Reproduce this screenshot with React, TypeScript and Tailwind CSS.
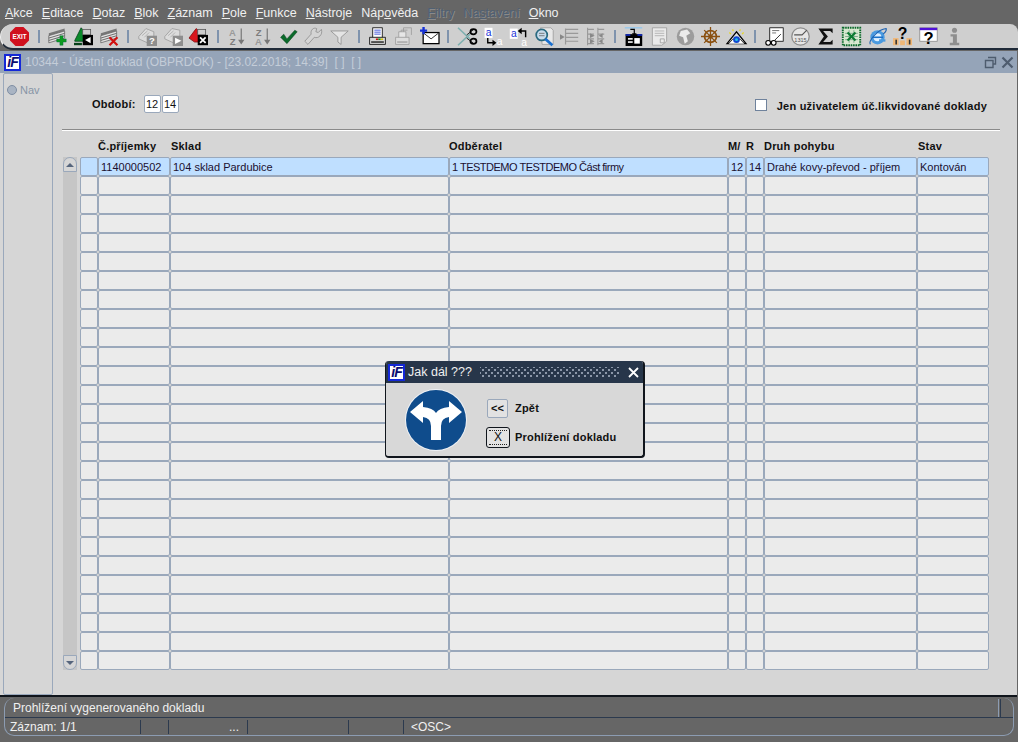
import React from 'react'

const Ico = ({ children }: { children: React.ReactNode }) => (
  <svg width="19" height="19" viewBox="0 0 24 24" className="overflow-visible">{children}</svg>
)

const Stripes = () => (
  <g>
    <path d="M1 8 L21 2 V5 L1 11 Z" fill="#777" />
    <path d="M1 11 L21 5 V14 L1 20 Z" fill="#e2e2e2" stroke="#666" strokeWidth="1" />
    <path d="M1 14 L21 8 M1 17 L21 11" stroke="#666" strokeWidth="1.2" />
  </g>
)

const icons: React.ReactNode[] = [
  <Ico key="exit">
    <path d="M7 0 H17 L24 7 V17 L17 24 H7 L0 17 V7 Z" fill="#d0101e" />
    <text x="12" y="15.5" textAnchor="middle" fontSize="8" fontWeight="700" fill="#fff" fontFamily="Liberation Sans">EXIT</text>
  </Ico>,
  <Ico key="add"><Stripes /><path d="M15 11 h4 v4 h4 v4 h-4 v4 h-4 v-4 h-4 v-4 h4 Z" fill="#0c9a20" stroke="#064" strokeWidth=".5" /></Ico>,
  <Ico key="rec">
    <path d="M1 17 L9 1 L15 8 V18 H1 Z" fill="#0a8a2a" stroke="#04401a" />
    <rect x="11" y="3" width="10" height="7" fill="#ccc" stroke="#555" />
    <rect x="11" y="10" width="13" height="13" fill="#000" />
    <path d="M14 16.5 L21 12.5 V20.5 Z" fill="#fff" />
    <path d="M0 20 h10 v3 h-10 Z" fill="#06401a" />
  </Ico>,
  <Ico key="del"><Stripes /><path d="M12 13 L22 23 M22 13 L12 23" stroke="#d01010" strokeWidth="2.8" /></Ico>,
  <Ico key="q">
    <path d="M1 12 L10 2 L20 6 V12 L12 20 L1 15 Z" fill="#dcdcdc" stroke="#999" />
    <path d="M5 11 L12 5 M8 13 L14 7" stroke="#aaa" />
    <rect x="11" y="11" width="13" height="13" fill="#8e8e8e" />
    <text x="17.5" y="22" textAnchor="middle" fontSize="12" fontWeight="700" fill="#fff" fontFamily="Liberation Sans">?</text>
  </Ico>,
  <Ico key="play">
    <path d="M1 12 L10 2 L20 4 V12 L12 20 L1 15 Z" fill="#dcdcdc" stroke="#999" />
    <path d="M5 11 L12 5 M8 13 L14 7" stroke="#aaa" />
    <rect x="11" y="11" width="13" height="13" fill="#8e8e8e" />
    <path d="M14 13.5 L22 17.5 L14 21.5 Z" fill="#fff" />
  </Ico>,
  <Ico key="redx">
    <path d="M0 14 L9 2 L15 7 V19 L7 19 Z" fill="#d8161c" stroke="#801010" />
    <rect x="11" y="3" width="10" height="7" fill="#ccc" stroke="#555" />
    <rect x="11" y="10" width="13" height="13" fill="#000" />
    <path d="M14 13 L21 20 M21 13 L14 20" stroke="#fff" strokeWidth="2.2" />
  </Ico>,
  <Ico key="az">
    <text x="7" y="11" textAnchor="middle" fontSize="12" fontWeight="700" fill="#9a9a9a" fontFamily="Liberation Sans">A</text>
    <text x="7" y="23" textAnchor="middle" fontSize="12" fontWeight="700" fill="#7c7c7c" fontFamily="Liberation Sans">Z</text>
    <path d="M18 2 V18" stroke="#777" strokeWidth="1.5" /><path d="M14 16 H22 L18 22 Z" fill="#777" />
  </Ico>,
  <Ico key="za">
    <text x="7" y="11" textAnchor="middle" fontSize="12" fontWeight="700" fill="#7c7c7c" fontFamily="Liberation Sans">Z</text>
    <text x="7" y="23" textAnchor="middle" fontSize="12" fontWeight="700" fill="#9a9a9a" fontFamily="Liberation Sans">A</text>
    <path d="M18 2 V18" stroke="#777" strokeWidth="1.5" /><path d="M14 16 H22 L18 22 Z" fill="#777" />
  </Ico>,
  <Ico key="ok"><path d="M2 13 L6 9 L10 15 L20 4 L23 6 L10 21 Z" fill="#0a6a2a" stroke="#043a16" strokeWidth=".6" /></Ico>,
  <Ico key="wrench"><path d="M22 3 L18 7 L15 6 L16 2 C12 0 8 4 9 9 L1 18 L5 22 L13 13 C18 15 24 10 22 3 Z" fill="#d4d4d4" stroke="#8c8c8c" /></Ico>,
  <Ico key="filter"><path d="M1 5 H23 L14 13 V22 L10 19 V13 Z" fill="#e4e4e4" stroke="#8c8c8c" /></Ico>,
  <Ico key="print">
    <rect x="6" y="1" width="12" height="13" fill="#fff" stroke="#000" />
    <path d="M8 4 h8 M8 6.5 h8 M8 9 h8" stroke="#1a30d0" />
    <path d="M2 13 H22 V22 H2 Z" fill="#d8d8d8" stroke="#000" />
    <path d="M4 19 h16" stroke="#333" strokeWidth="2" />
    <path d="M10 15.5 h3" stroke="#d01010" strokeWidth="2" /><path d="M13 15.5 h3" stroke="#0a9a20" strokeWidth="2" /><path d="M16 15.5 h3" stroke="#d8c010" strokeWidth="2" />
  </Ico>,
  <Ico key="print2">
    <path d="M9 12 V4 H17 M12 10 V1 H22 V10" fill="none" stroke="#999" />
    <path d="M6 14 V6 H15 V14 Z" fill="#e6e6e6" stroke="#999" />
    <path d="M2 13 H19 V22 H2 Z" fill="#ddd" stroke="#999" />
    <path d="M4 19 h13" stroke="#aaa" strokeWidth="2" />
  </Ico>,
  <Ico key="mail">
    <rect x="4" y="7" width="20" height="14" fill="#fff" stroke="#000" strokeWidth="1.6" />
    <path d="M5 8 L14 15 L23 8" fill="none" stroke="#000" />
    <path d="M3 0 h3 v3 h3 v3 h-3 v3 h-3 v-3 h-3 v-3 h3 Z" fill="#1430d8" />
  </Ico>,
  <Ico key="cut">
    <path d="M0 1 L15 15" stroke="#7fb0b0" strokeWidth="2" /><path d="M0 23 L15 9" stroke="#7fb0b0" strokeWidth="2" />
    <path d="M11 10 L20 3 M11 14 L20 21" stroke="#000" strokeWidth="1" />
    <ellipse cx="19.5" cy="6" rx="3.8" ry="3.2" fill="none" stroke="#000" strokeWidth="2.2" />
    <ellipse cx="19.5" cy="18" rx="3.8" ry="3.2" fill="none" stroke="#000" strokeWidth="2.2" />
  </Ico>,
  <Ico key="copy">
    <rect x="2" y="1" width="10" height="13" fill="#fff" />
    <text x="7" y="11.5" textAnchor="middle" fontSize="13" fill="#1a30d8" fontFamily="Liberation Sans">a</text>
    <path d="M6 14 V20 H13" fill="none" stroke="#000" strokeWidth="1.8" /><path d="M12 16 L17 20 L12 24 Z" fill="#000" />
    <text x="21" y="23" textAnchor="middle" fontSize="13" fill="#fff" fontFamily="Liberation Sans">a</text>
  </Ico>,
  <Ico key="paste">
    <rect x="1" y="2" width="10" height="13" fill="#fff" />
    <text x="6" y="12.5" textAnchor="middle" fontSize="13" fill="#1a30d8" fontFamily="Liberation Sans">a</text>
    <path d="M21 13 V5 H14" fill="none" stroke="#000" strokeWidth="1.8" /><path d="M16 1 L11 5 L16 9 Z" fill="#000" />
    <text x="19" y="24" textAnchor="middle" fontSize="13" fill="#fff" fontFamily="Liberation Sans">a</text>
  </Ico>,
  <Ico key="find">
    <path d="M7 1 H20 L23 4 V22 H9 Z" fill="#e8e8e8" stroke="#999" />
    <circle cx="8.5" cy="10" r="7" fill="#c8dcec" stroke="#2a6a80" strokeWidth="2.2" />
    <path d="M5 8 h7 M5 11 h7" stroke="#666" />
    <path d="M13 15 L22 23" stroke="#1a70d0" strokeWidth="3.4" />
  </Ico>,
  <Ico key="list">
    <path d="M7 2 V22 M7 3 H23 M7 8 H23 M7 13 H23 M7 18 H23" stroke="#999" strokeWidth="1.5" fill="none" />
    <path d="M0 9 L6 12.5 L0 16 Z" fill="#888" />
  </Ico>,
  <Ico key="cols">
    <path d="M2 1 V23 M15 1 V23 M2 3 H10 M2 9 H10 M2 15 H10 M2 21 H10 M15 3 H23 M15 15 H23 M15 21 H23 M15 9 H23" stroke="#999" strokeWidth="1.4" fill="none" />
    <path d="M5 8 L11 11 L5 14 Z M21 8 L16 11 L21 14 Z M5 15 L11 18 L5 21 Z M21 15 L16 18 L21 21 Z" fill="#888" />
  </Ico>,
  <Ico key="imp">
    <path d="M1 1 H23" stroke="#9cc8e8" strokeWidth="2" />
    <rect x="2" y="9" width="21" height="15" fill="#000" />
    <path d="M2 9 h6 v2 h-6 Z M17 9 h6 v2 h-6 Z" fill="#1430d8" />
    <rect x="5" y="14" width="6" height="2" fill="#fff" /><rect x="5" y="18" width="6" height="2" fill="#fff" /><rect x="13" y="14" width="7" height="7" fill="#fff" />
    <path d="M8 3 H13 V9" fill="none" stroke="#000" strokeWidth="1.5" /><path d="M10 8 H16 L13 12 Z" fill="#000" />
  </Ico>,
  <Ico key="page">
    <path d="M3 1 H21 V18 L15 23 H3 Z" fill="#eaeaea" stroke="#999" />
    <path d="M6 5 h12 M6 8 h12 M6 11 h12" stroke="#aaa" />
    <path d="M13 15 h5 v5 h-5 Z" fill="none" stroke="#999" />
  </Ico>,
  <Ico key="globe">
    <circle cx="12" cy="12" r="11" fill="#9c9c9c" />
    <path d="M6 5 L14 3 L18 8 L13 11 L15 18 L11 21 L9 13 L4 11 Z" fill="#ececec" />
  </Ico>,
  <Ico key="wheel">
    <circle cx="12" cy="12" r="7.5" fill="none" stroke="#8a5010" strokeWidth="2.2" />
    <circle cx="12" cy="12" r="2.8" fill="#8a5010" />
    <path d="M12 0 V24 M0 12 H24 M4 4 L20 20 M20 4 L4 20" stroke="#8a5010" strokeWidth="1.6" />
  </Ico>,
  <Ico key="eye">
    <path d="M0 21 L12 6 L24 21 Z" fill="#ddd" stroke="#000" strokeWidth="1.6" />
    <path d="M2 21 Q12 7 22 21" fill="#fff" stroke="#000" />
    <circle cx="12" cy="16" r="4.2" fill="#1048d0" /><circle cx="12" cy="16" r="1.8" fill="#20c8e8" />
    <path d="M3 7 l2 2 M7 3 l1 2 M17 3 l-1 2 M21 7 l-2 2" stroke="#e8d820" strokeWidth="1.6" />
  </Ico>,
  <Ico key="chart">
    <rect x="6" y="1" width="17" height="17" fill="#fff" stroke="#000" />
    <path d="M9 4.5 h9 M9 7.5 h5" stroke="#555" /><path d="M12 17 L20 9" stroke="#000" strokeWidth="1" />
    <circle cx="4" cy="20" r="3" fill="#fff" stroke="#000" strokeWidth="1.4" /><circle cx="11" cy="20" r="3" fill="#fff" stroke="#000" strokeWidth="1.4" />
  </Ico>,
  <Ico key="gauge">
    <circle cx="12" cy="12" r="11" fill="#e6e6e6" stroke="#8c8c8c" strokeWidth="1.6" />
    <path d="M4 10 H14 L20 4" fill="none" stroke="#555" strokeWidth="1.4" />
    <text x="12" y="19" textAnchor="middle" fontSize="7" fill="#555" fontFamily="Liberation Sans">1315</text>
  </Ico>,
  <Ico key="sum"><path d="M3 2 H21 V8 L18 5 H9 L15 12 L9 19 H18 L21 16 V22 H3 L10 12 Z" fill="#111" /></Ico>,
  <Ico key="xls">
    <rect x="1" y="1" width="22" height="22" fill="#d8e8d0" stroke="#0a6a2a" strokeWidth="2.4" strokeDasharray="2 1" />
    <path d="M4 8 H20 M4 12 H20 M4 16 H20 M9 4 V20 M15 4 V20" stroke="#6aa080" />
    <path d="M7 7 L17 17 M17 7 L7 17" stroke="#0a7a30" strokeWidth="2.6" />
  </Ico>,
  <Ico key="ie">
    <circle cx="12" cy="13" r="9" fill="#4a9ae0" />
    <circle cx="12" cy="13" r="5" fill="#dff0ff" />
    <rect x="6" y="12" width="13" height="2" fill="#1a70c8" /><rect x="14" y="15.5" width="8" height="3" fill="#4a9ae0" />
    <path d="M3 22 C0 18 12 3 23 2 C24 6 20 8 19 9" fill="none" stroke="#1a60b0" strokeWidth="1.3" />
  </Ico>,
  <Ico key="help1">
    <text x="12" y="15" textAnchor="middle" fontSize="20" fontWeight="700" fill="#000" fontFamily="Liberation Sans">?</text>
    <rect x="0" y="14" width="7" height="9" fill="#f0b878" /><rect x="9" y="17" width="6" height="6" fill="#f0b878" /><rect x="17" y="14" width="7" height="9" fill="#f0b878" />
    <rect x="3" y="16" width="2" height="6" fill="#333" /><rect x="20" y="16" width="2" height="6" fill="#333" />
  </Ico>,
  <Ico key="help2">
    <rect x="1" y="1" width="22" height="17" fill="#fff" stroke="#888" />
    <rect x="1" y="1" width="22" height="3" fill="#5010d8" />
    <text x="12" y="22" textAnchor="middle" fontSize="21" fontWeight="700" fill="#000" fontFamily="Liberation Sans">?</text>
  </Ico>,
  <Ico key="info">
    <circle cx="12" cy="4" r="3.2" fill="#8e8e8e" />
    <path d="M7 9 H15 V20 H18 V23 H6 V20 H10 V12 H7 Z" fill="#8e8e8e" />
  </Ico>,
]

// za kterou ikonou je oddelovac
const sepAfter = [0, 3, 6, 11, 14, 20, 25]

const menu = [
  { l: '', u: 'A', r: 'kce' },
  { l: '', u: 'E', r: 'ditace' },
  { l: '', u: 'D', r: 'otaz' },
  { l: '', u: 'B', r: 'lok' },
  { l: '', u: 'Z', r: 'áznam' },
  { l: '', u: 'P', r: 'ole' },
  { l: '', u: 'F', r: 'unkce' },
  { l: '', u: 'N', r: 'ástroje' },
  { l: 'Náp', u: 'o', r: 'věda' },
  { l: '', u: 'F', r: 'iltry', off: true },
  { l: 'Na', u: 's', r: 'tavení', off: true },
  { l: '', u: 'O', r: 'kno' },
]

const firstRow = ['', '1140000502', '104 sklad Pardubice', '1 TESTDEMO TESTDEMO Část firmy', '12', '14', 'Drahé kovy-převod - příjem', 'Kontován']

const Logo = () => (
  <div className="flex h-[17px] w-[17px] shrink-0 items-center justify-center border-2 border-[#1428d8] bg-white">
    <span className="text-[14px] font-bold italic leading-none tracking-[-1px] text-[#0c0c70]">iF</span>
  </div>
)

export default function App() {
  return (
    <div className="relative flex h-[742px] w-[1018px] flex-col overflow-hidden bg-[#666666] font-['Liberation_Sans',Arial,sans-serif] text-[11px]">
      {/* Menu */}
      <div className="flex h-[24px] shrink-0 items-center gap-[9px] px-[5px] pt-[2px] text-[12.5px] text-[#f0f0f0]">
        {menu.map((m) => (
          <span key={m.l + m.u + m.r} className={m.off ? 'text-[#4f6074] [text-shadow:1px_1px_0_#8a8a8a]' : ''}>
            {m.l}
            <span className="underline">{m.u}</span>
            {m.r}
          </span>
        ))}
      </div>

      {/* Toolbar */}
      <div className="flex h-[26px] shrink-0 items-center rounded-l-[13px] rounded-tr-[8px] border-b-2 border-l border-b-[#1f2a38] border-l-[#efefef] bg-[#cfcfcf] pl-[6px]">
        {icons.map((icon, i) => (
          <React.Fragment key={i}>
            <div className="flex h-[24px] w-[25.7px] shrink-0 items-center justify-center">{icon}</div>
            {sepAfter.includes(i) && (
              <div className="flex h-[24px] w-[12.4px] shrink-0 items-center justify-center">
                <div className="h-[13px] w-[2px] bg-[#7f93ad]" />
              </div>
            )}
          </React.Fragment>
        ))}
      </div>

      {/* Okno */}
      <div className="mt-[1px] flex h-[646px] w-[1017px] shrink-0 flex-col border-b-2 border-[#10151c] bg-[#d6d6d6]">
        <div className="flex h-[22px] shrink-0 items-center bg-[#95a4b8] pl-[4px] pr-[3px] text-[12px] text-[#c4cdd8]">
          <Logo />
          <span className="ml-[4px] whitespace-pre">10344 - Účetní doklad (OBPRDOK) - [23.02.2018; 14:39]  [ ]  [ ]</span>
          <div className="ml-auto flex items-center gap-[4px]">
            <svg width="13" height="13" viewBox="0 0 13 13"><path d="M4 1.5 H11.5 V8 H9 M1.5 4.5 H9 V11.5 H1.5 Z" fill="none" stroke="#4e5c6e" strokeWidth="1.4" /></svg>
            <svg width="13" height="13" viewBox="0 0 13 13"><path d="M1.5 1.5 L11.5 11.5 M11.5 1.5 L1.5 11.5" stroke="#4e5c6e" strokeWidth="2.2" /></svg>
          </div>
        </div>

        <div className="flex min-h-0 flex-1">
          {/* Navigacni panel */}
          <div className="ml-[3px] h-[622px] w-[50px] shrink-0 rounded-[2px] border border-[#9aa8bb] px-[3px] pt-[8px]">
            <div className="flex items-center gap-[3px] text-[11px] text-[#8795a6]">
              <span className="h-[10px] w-[10px] rounded-full border border-[#7f8ea3] bg-[#a9b4c3]" />
              Nav
            </div>
          </div>

          <div className="ml-[9px] flex w-[938px] flex-col">
            <div className="flex h-[56px] shrink-0 items-start">
              <div className="ml-[30px] mt-[22px] flex items-center font-bold tracking-[0.2px] text-[#111]">
                Období:
                <div className="ml-[8px] flex gap-[1px] font-normal tracking-normal">
                  <span className="flex h-[18px] w-[17px] items-center justify-center rounded-[2px] border border-[#9aa8bb] bg-white">12</span>
                  <span className="flex h-[18px] w-[17px] items-center justify-center rounded-[2px] border border-[#9aa8bb] bg-white">14</span>
                </div>
              </div>
              <div className="ml-auto mr-[13px] mt-[26px] flex items-start font-bold tracking-[0.23px] text-[#111]">
                <span className="h-[12px] w-[12px] border border-[#6f829c] bg-white" />
                <span className="ml-[10px] mt-[1px] leading-[13px]">Jen uživatelem úč.likvidované doklady</span>
              </div>
            </div>

            <div className="h-[2px] shrink-0 border-b border-white bg-[#8a8a8a]" />

            <div className="ml-[18px] mt-[8px] flex h-[18px] shrink-0 items-start">
              <div className="grid grid-cols-[18px_72px_279px_279px_18px_18px_153px_72px] font-bold leading-[14px] tracking-[0.2px] text-[#111]">
                <span />
                <span>Č.příjemky</span>
                <span className="pl-[1px]">Sklad</span>
                <span>Odběratel</span>
                <span>M/</span>
                <span>R</span>
                <span>Druh pohybu</span>
                <span className="pl-[1px]">Stav</span>
              </div>
            </div>

            <div className="flex">
              {/* Posuvnik */}
              <div className="ml-[1px] mr-[3px] flex h-[513px] w-[14px] shrink-0 flex-col bg-[#c6c6c6]">
                <div className="flex h-[15px] items-center justify-center rounded-t-[7px] border border-[#9aa8bb] bg-[#d6d6d6]">
                  <span className="border-x-[4px] border-b-[4px] border-x-transparent border-b-[#56657c]" />
                </div>
                <div className="flex-1" />
                <div className="flex h-[15px] items-center justify-center rounded-b-[7px] border border-[#9aa8bb] bg-[#d6d6d6]">
                  <span className="border-x-[4px] border-t-[4px] border-x-transparent border-t-[#56657c]" />
                </div>
              </div>

              <div className="grid auto-rows-[19px] grid-cols-[18px_72px_279px_279px_18px_18px_153px_72px]">
                {Array.from({ length: 27 }).flatMap((_, r) =>
                  firstRow.map((text, c) => (
                    <div
                      key={r + '-' + c}
                      className={
                        r === 0
                          ? 'overflow-hidden whitespace-nowrap rounded-[2px] border border-[#9aa8bb] bg-[#bfdfff] px-[2px] pt-[1px] text-[11px] leading-[17px] text-[#1c1030]'
                          : 'rounded-[2px] border border-[#9aa8bb] bg-[#ebebeb]'
                      }
                    >
                      {r === 0 && c === 3 ? <span className="tracking-[-0.5px]">{text}</span> : r === 0 ? text : ''}
                    </div>
                  ))
                )}
              </div>
            </div>
          </div>
        </div>
      </div>

      {/* Stavovy radek */}
      <div className="ml-[4px] mt-[1px] flex h-[38px] w-[1010px] shrink-0 flex-col rounded-[10px] border-x border-b border-[#8c9cb2] text-[12px] text-[#f0f0f0]">
        <div className="relative flex h-[20px] shrink-0 items-center border-b border-[#2c3a4e] pl-[8px] pt-[1px]">
          Prohlížení vygenerovaného dokladu
          <div className="absolute right-[12px] top-[1px] flex h-[18px] gap-[1px]">
            <span className="w-[1px] bg-[#8c9cb2]" />
            <span className="w-[1px] bg-[#2c3a4e]" />
          </div>
        </div>
        <div className="flex h-[17px] items-center pl-[5px]">
          <span className="w-[130px]">Záznam: 1/1</span>
          <span className="h-[14px] w-[1px] bg-[#2c3a4e]" />
          <span className="w-[27px]" />
          <span className="h-[14px] w-[1px] bg-[#2c3a4e]" />
          <span className="w-[78px] pr-[8px] text-right">...</span>
          <span className="h-[14px] w-[1px] bg-[#2c3a4e]" />
          <span className="w-[100px]" />
          <span className="h-[14px] w-[1px] bg-[#2c3a4e]" />
          <span className="w-[54px]" />
          <span className="h-[14px] w-[1px] bg-[#2c3a4e]" />
          <span className="ml-[7px]">&lt;OSC&gt;</span>
        </div>
      </div>

      {/* Dialog */}
      <div className="absolute left-[385px] top-[361px] flex h-[97px] w-[260px] flex-col overflow-hidden rounded-[4px] border-b-2 border-l border-r-2 border-[#10151c] bg-[#d8d8d8]">
        <div className="flex h-[22px] shrink-0 items-center bg-[#27364a] pl-[2px] pr-[5px] text-[12.5px] text-[#f0f0f0]">
          <Logo />
          <span className="ml-[3px] whitespace-nowrap">Jak dál ???</span>
          <div className="ml-[8px] h-[11px] flex-1 bg-[radial-gradient(#8d99aa_0.7px,transparent_1px),radial-gradient(#8d99aa_0.7px,transparent_1px)] bg-[length:6px_6px] bg-[position:0_0,3px_3px]" />
          <svg className="ml-[9px] mr-[-1px]" width="11" height="11" viewBox="0 0 11 11"><path d="M1 1 L10 10 M10 1 L1 10" stroke="#fff" strokeWidth="1.8" /></svg>
        </div>
        <div className="flex flex-1">
          <svg className="ml-[18px] mt-[5px]" width="64" height="64" viewBox="0 0 64 64">
            <circle cx="32" cy="32" r="31" fill="#eef1f5" />
            <circle cx="32" cy="32" r="30" fill="#0f4c8c" />
            <path d="M6 24 L19 13 V19 Q29 20 32 25 Q35 20 45 19 V13 L58 24 L45 35 V29 Q37 30 37 38 V52 H27 V38 Q27 30 19 29 V35 Z" fill="#fff" />
          </svg>
          <div className="ml-[18px] flex flex-col font-bold tracking-[0.2px] text-[#111]">
            <div className="ml-[1px] mt-[16px] flex items-center">
              <span className="flex h-[19px] w-[21px] items-center justify-center rounded-[2px] border border-[#9aa8bb] bg-[#e2e2e2]">&lt;&lt;</span>
              <span className="ml-[7px]">Zpět</span>
            </div>
            <div className="mt-[8px] flex items-center pt-[1px]">
              <span className="flex h-[21px] w-[24px] items-center justify-center rounded-[3px] border border-[#10151c] bg-[#e2e2e2] text-[12px] font-normal">
                <span className="border-y border-dotted border-[#222] px-[5px] leading-[13px]">X</span>
              </span>
              <span className="ml-[5px]">Prohlížení dokladu</span>
            </div>
          </div>
        </div>
      </div>
    </div>
  )
}
